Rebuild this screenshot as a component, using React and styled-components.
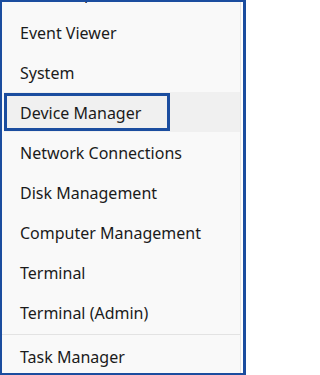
import React from 'react';
import styled, { createGlobalStyle } from 'styled-components';

const Global = createGlobalStyle`
  html, body {
    margin: 0;
    padding: 0;
    background: #ffffff;
  }
  * { box-sizing: border-box; }
`;

const Frame = styled.div`
  width: 246px;
  height: 375px;
  border: 2px solid #1b4d9f;
  border-right-width: 3px;
  background: #ffffff;
  overflow: hidden;
`;

const Menu = styled.ul`
  list-style: none;
  margin: -30px 0 0 0;
  padding: 0;
  background: #f9f9f9;
  border-right: 1px solid #e6e6e6;
  width: 239px;
  font-family: "Noto Sans", "Open Sans", sans-serif;
  font-size: 16px;
  color: #1b1b1b;
`;

const Item = styled.li`
  height: 40px;
  margin-left: 2px;
  display: flex;
  align-items: center;
  background: ${(p) => (p.$active ? '#f0f0f0' : 'transparent')};
`;

const Label = styled.span`
  display: flex;
  align-items: center;
  height: 38px;
  padding-top: 2px;
  width: ${(p) => (p.$focused ? '166px' : 'auto')};
  padding-left: ${(p) => (p.$focused ? '13px' : '16px')};
  border: ${(p) => (p.$focused ? '3px solid #1b4d9f' : 'none')};
  white-space: nowrap;
`;

const Divider = styled.li`
  height: 1px;
  margin: 2px 0 1px 0;
  background: #e3e3e3;
`;

const items = [
  'Power Options',
  'Event Viewer',
  'System',
  'Device Manager',
  'Network Connections',
  'Disk Management',
  'Computer Management',
  'Terminal',
  'Terminal (Admin)',
];

export default function App() {
  return (
    <>
      <Global />
      <Frame>
        <Menu>
          {items.map((name) => {
            const focused = name === 'Device Manager';
            return (
              <Item key={name} $active={focused}>
                <Label $focused={focused}>{name}</Label>
              </Item>
            );
          })}
          <Divider />
          <Item>
            <Label>Task Manager</Label>
          </Item>
        </Menu>
      </Frame>
    </>
  );
}
